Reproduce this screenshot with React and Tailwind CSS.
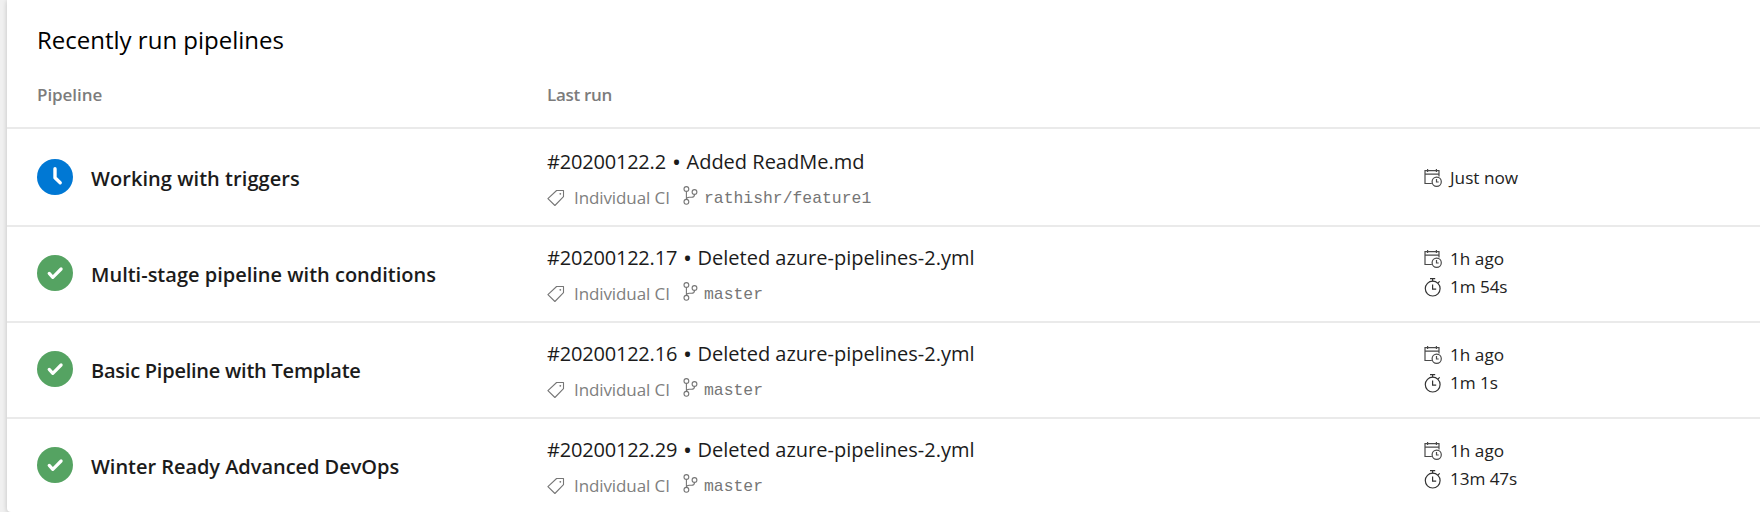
const runs = [
  { name: "Working with triggers", tracking: "tracking-[0.05px]", status: "queued", run: "#20200122.2", msg: "Added ReadMe.md", branch: "rathishr/feature1", when: "Just now" },
  { name: "Multi-stage pipeline with conditions", tracking: "tracking-normal", status: "ok", run: "#20200122.17", msg: "Deleted azure-pipelines-2.yml", branch: "master", when: "1h ago", took: "1m 54s" },
  { name: "Basic Pipeline with Template", tracking: "tracking-[-0.24px]", status: "ok", run: "#20200122.16", msg: "Deleted azure-pipelines-2.yml", branch: "master", when: "1h ago", took: "1m 1s" },
  { name: "Winter Ready Advanced DevOps", tracking: "tracking-[-0.04px]", status: "ok", run: "#20200122.29", msg: "Deleted azure-pipelines-2.yml", branch: "master", when: "1h ago", took: "13m 47s" },
];

function StatusIcon({ status }) {
  const queued = status === "queued";
  return (
    <svg className="size-9 shrink-0" viewBox="0 0 36 36" fill="none" stroke="#fff" strokeLinecap="round" strokeLinejoin="round">
      <circle cx="18" cy="18" r="18" stroke="none" fill={queued ? "#0078d4" : "#55a362"} />
      {queued ? <path d="M18 9.8v9l5.2 5" strokeWidth="3.4" /> : <path d="M12.2 18.4l3.6 3.9 8.3-8.3" strokeWidth="3.2" />}
    </svg>
  );
}

function TagIcon() {
  return (
    <svg className="size-[18px] shrink-0" viewBox="0 0 18 18" fill="none" stroke="#767676" strokeWidth="1.1" strokeLinejoin="round">
      <path d="M9.6 1.5h6.9v6.2l-8.6 8.8-7-6.8z" />
      <circle cx="13.3" cy="4.8" r="0.9" fill="#767676" stroke="none" />
    </svg>
  );
}

function BranchIcon() {
  return (
    <svg className="h-[19px] w-[15px] shrink-0" viewBox="0 0 15 19" fill="none" stroke="#767676" strokeWidth="1.1">
      <circle cx="3.4" cy="3" r="2.4" />
      <circle cx="3.4" cy="15.8" r="2.4" />
      <circle cx="11.5" cy="6" r="2.4" />
      <path d="M3.4 5.4v8M11.5 8.4c0 2-1 2.8-3 2.8H6.2c-1.6 0-2.8.7-2.8 2.1" />
    </svg>
  );
}

function CalendarIcon() {
  return (
    <svg className="size-[18px] shrink-0" viewBox="0 0 18 18" fill="none" stroke="#4a4a4a" strokeWidth="1.2">
      <path d="M7.8 14.5H1V1.7h14v5.7M1 5.2h14M3.6 0v3M12.4 0v3" />
      <circle cx="12.7" cy="12.7" r="4.6" />
      <path d="M12.5 10v3h2.2" />
    </svg>
  );
}

function TimerIcon() {
  return (
    <svg className="h-[19px] w-[18px] shrink-0" viewBox="0 0 18 19" fill="none" stroke="#333" strokeWidth="1.2">
      <circle cx="8.7" cy="10.6" r="7.4" />
      <path d="M8.6 6.4v4.8h3.6M6 .7h5.2M8.6.7v2.5M13.8 5.2l1.9-1.9" />
    </svg>
  );
}

export default function App() {
  return (
    <div className="h-[512px] w-[1760px] overflow-hidden bg-[#f0f0f0] pl-[7px] font-['Open_Sans','Noto_Sans',sans-serif]">
      <main className="h-[512px] rounded-bl-[4px] bg-white shadow-[0_1px_5px_rgba(0,0,0,0.2)]">
        <header className="flex h-[127px] flex-col pl-[30px]">
          <h1 className="mt-[24px] h-8 text-[24px] leading-8 font-normal text-black"><span>Recently run pipelines</span></h1>
          <div className="mt-[27px] flex h-6 text-[17px] leading-6 font-semibold text-[#7c7c7c]">
            <div className="w-[510px]"><span className="tracking-[-0.05px]">Pipeline</span></div>
            <div><span className="tracking-[-0.3px]">Last run</span></div>
          </div>
        </header>
        {runs.map((r, i) => (
          <section key={r.name} className={i === 0 ? "flex h-[98px] border-t-2 border-[#eaeaea] pl-[30px]" : "flex h-24 border-t-2 border-[#eaeaea] pl-[30px]"}>
            <div className={i === 0 ? "flex w-[510px] pt-[30px]" : "flex w-[510px] pt-[28px]"}>
              <StatusIcon status={r.status} />
              <span className={`mt-[6px] ml-[18px] h-7 text-[20px] leading-7 font-semibold whitespace-nowrap text-[#1b1b1b] ${r.tracking}`}>{r.name}</span>
            </div>
            <div className={i === 0 ? "w-[877px] pt-[19px]" : "w-[877px] pt-[17px]"}>
              <div className="flex h-7 text-[20px] leading-7 whitespace-nowrap text-[#1b1b1b]">
                <span className={i === 0 ? "w-[125px] tracking-[-0.2px]" : "w-[136px] tracking-[-0.2px]"}>{r.run}</span>
                <span className="w-[14.5px] text-[24px]">•</span>
                <span>{r.msg}</span>
              </div>
              <div className="mt-[8px] flex h-7 items-center text-[17px] leading-7 text-[#808080]">
                <TagIcon />
                <span className="ml-[9px] w-[109px] tracking-[-0.1px] whitespace-nowrap">Individual CI</span>
                <span className="-mt-[5px]"><BranchIcon /></span>
                <span className="mt-[2px] ml-[6px] font-['Liberation_Mono',monospace] text-[16.4px] text-[#767676]">{r.branch}</span>
              </div>
            </div>
            <div className={r.took ? "pt-[18px] text-[17.2px] leading-7 text-[#222]" : "pt-[35px] text-[17.2px] leading-7 text-[#222]"}>
              <div className="flex h-7 items-center gap-[8px]"><CalendarIcon /><span>{r.when}</span></div>
              {r.took && <div className="flex h-7 items-center gap-[8px]"><TimerIcon /><span className="tracking-[-0.1px]">{r.took}</span></div>}
            </div>
          </section>
        ))}
      </main>
    </div>
  );
}
